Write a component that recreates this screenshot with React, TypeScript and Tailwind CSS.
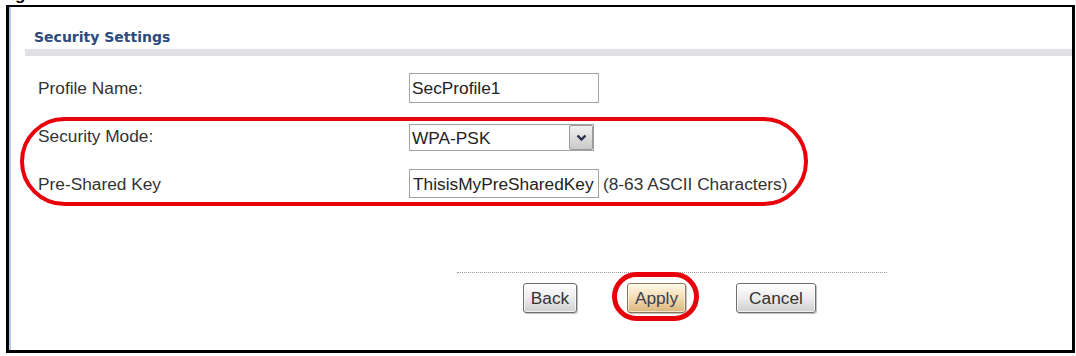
import React from "react";

function Btn({ label, w, apply }: { label: string; w: number; apply?: boolean }) {
  return (
    <div
      className={
        apply
          ? "h-[30px] flex items-center justify-center rounded-[3px] border border-[#8a7558] bg-gradient-to-b from-[#fff8e8] via-[#f3dcb0] to-[#d9b57c] shadow-[inset_0_0_0_1px_rgba(255,255,255,0.6),1px_1px_1px_rgba(0,0,0,0.25)] text-[17.3px] leading-[20px] text-[#3a3f55]"
          : "h-[30px] flex items-center justify-center rounded-[3px] border border-[#6e6e6e] bg-gradient-to-b from-[#ffffff] via-[#ececec] to-[#cfcfcf] shadow-[inset_0_0_0_1px_rgba(255,255,255,0.7),1px_1px_1px_rgba(0,0,0,0.25)] text-[17.3px] leading-[20px] text-[#333]"
      }
      style={{ width: w }}
    >
      {label}
    </div>
  );
}

export default function App() {
  const sans = { fontFamily: '"Liberation Sans", Arial, sans-serif' };
  return (
    <div className="relative w-[1076px] h-[356px] bg-white overflow-hidden" style={sans}>
      {/* cut-off caption */}
      <div className="h-[5px] overflow-hidden pl-[0px]">
        <div className="mt-[-15.5px] leading-[20px] text-[17px] font-bold text-black">Figure</div>
      </div>

      {/* frame */}
      <div className="ml-[6px] w-[1069px] h-[348px] border-[3px] border-t-2 border-black">
        <div className="h-full border-l-2 border-[#b4c8ea] flex flex-col bg-white">
          {/* header */}
          <div className="h-[42px] pt-[22px] pl-[23px] bg-[#fdfefd]">
            <div
              className="text-[14px] leading-[16px] font-bold text-[#2d4a7e]"
              style={{ fontFamily: '"DejaVu Sans", Verdana, sans-serif' }}
            >
              Security Settings
            </div>
          </div>
          <div className="ml-[14px] h-[7px] bg-[#e1e1e5]" />

          {/* rows */}
          <div className="flex flex-col pl-[27px] text-[17.3px] leading-[20px] text-[#333]">
            <div className="mt-[17px] h-[30px] flex items-center">
              <div className="w-[371px]">Profile Name:</div>
              <div className="w-[190px] h-[30px] border border-[#a3a3a3] flex items-center pl-[2px] bg-white text-[#222]">
                SecProfile1
              </div>
            </div>
            <div className="mt-[21px] h-[27px] flex items-center">
              <div className="w-[371px] -mt-[4px]">Security Mode:</div>
              <div className="w-[185px] h-[27px] border border-[#a3a3a3] flex items-center bg-white text-[#222]">
                <div className="flex-1 pl-[2px]">WPA-PSK</div>
                <div className="w-[24px] h-[25px] border border-[#9a9a9a] rounded-[2px] bg-gradient-to-b from-[#f2f2f2] to-[#c9c9c9] flex items-center justify-center">
                  <svg width="11" height="8" viewBox="0 0 11 8">
                    <path d="M1.5 1.5 L5.5 5.5 L9.5 1.5" fill="none" stroke="#27314d" strokeWidth="2.4" />
                  </svg>
                </div>
              </div>
            </div>
            <div className="mt-[18px] h-[29px] flex items-center">
              <div className="w-[371px]">Pre-Shared Key</div>
              <div className="w-[190px] h-[29px] border border-[#a3a3a3] flex items-center pl-[3px] bg-white text-[#222] overflow-hidden whitespace-nowrap">
                ThisisMyPreSharedKey
              </div>
              <div className="ml-[4px] whitespace-nowrap">(8-63 ASCII Characters)</div>
            </div>
          </div>

          {/* footer */}
          <div className="ml-[446px] w-[430px] mt-[74px] border-t border-dotted border-[#9c9c9c]" />
          <div className="ml-[512px] mt-[10px] flex items-center gap-[50px]">
            <Btn label="Back" w={54} />
            <div className="relative">
              <Btn label="Apply" w={59} apply />
              <div className="absolute left-[-15px] top-[-11px] w-[87px] h-[49px] rounded-full border-[5px] border-[#e8000a]" />
            </div>
            <Btn label="Cancel" w={80} />
          </div>
        </div>
      </div>

      {/* annotation ring */}
      <div className="absolute left-[20px] top-[117px] w-[788px] h-[89px] rounded-[46px] border-[4px] border-[#e8000a]" />
    </div>
  );
}
